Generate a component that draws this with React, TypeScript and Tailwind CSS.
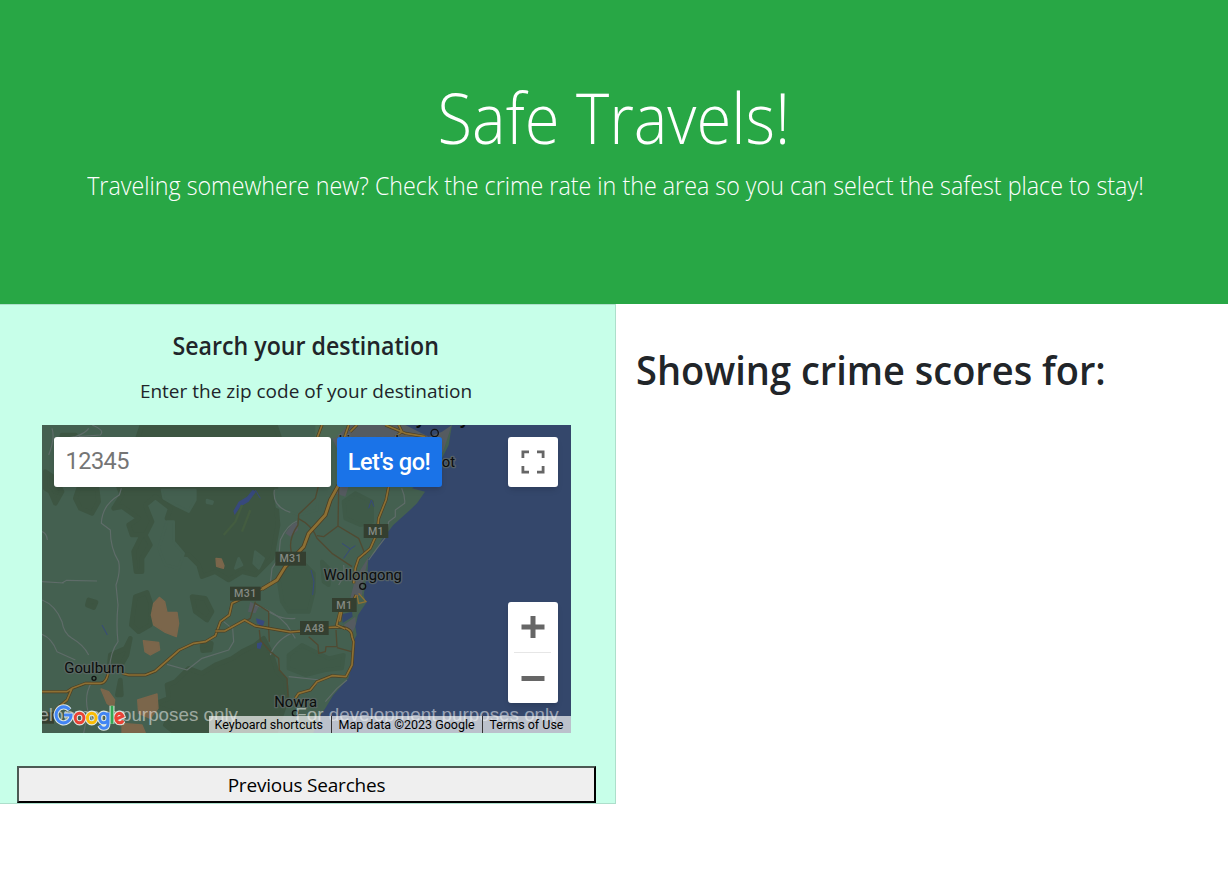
import React from "react";

const MINOR_ROADS = [
  "M0 470 L65 474 M60 474 L74 466 L165 468 M140 10 Q130 25 100 35 L40 45 M0 320 Q14 325 16 345 M0 525 Q40 540 60 590 Q65 625 90 640 Q125 660 140 690 M238 190 L232 210 Q180 240 178 295 L205 315 Q205 370 230 410 Q236 440 222 480 L228 540 Q222 600 228 650 Q205 680 202 735",
  "M30 10 Q40 40 20 90 M150 0 Q190 15 175 30 L110 35",
  "M0 628 Q30 640 45 680 L100 705 M150 770 Q125 810 138 860 L125 924",
  "M375 718 L435 735 L480 700 L560 675 L575 650 L572 610",
  "M697 195 Q690 245 745 262 M765 288 Q735 300 715 345 L710 400 L690 430 L685 475",
  "M1079 190 Q1090 215 1088 235 L1060 255 L1060 275 L1040 290 L1032 335 L1005 370 L980 405",
  "M740 755 L835 765 L815 785 M915 765 L885 790 L850 830 M640 540 Q700 560 735 600 L760 640",
  "M680 560 Q720 585 760 580 M685 690 Q705 640 760 620 M905 420 Q910 450 890 480 M545 590 L570 610",
];

const BROWN_ROADS = [
  "M830 180 L820 220 L770 268 L768 300 Q740 340 747 375 L750 410",
  "M768 280 Q810 300 825 340 L870 385 L930 425 M890 190 L888 303 L845 335 L825 332 M888 303 L950 340 L970 390",
  "M640 535 L680 560 L680 610 L682 650 M652 615 L655 645 L685 680 L710 700 L712 735 L735 760 L738 815",
  "M640 530 L625 580 L608 590 M800 635 L828 660 L830 685 L850 680 L852 665 L885 665 L882 615 M885 668 L928 680",
];

const HIGHWAYS = [
  "M660 492 L570 535 L562 570 L535 590 L520 632 L490 650 L455 655 L412 675 L340 738 L310 750 L260 750 L240 745",
  "M200 735 Q195 775 175 775 L130 775 L90 790 L75 800 L0 800 M90 790 L75 825 L45 850 L20 895",
  "M520 618 L548 618 L608 585 L640 603 L745 621 L780 618 M850 608 L885 606 Q930 606 930 635 L935 650 L930 720 L912 755 L870 752 L825 770 L805 795 L770 805 L760 820",
  "M1041 180 L1032 225 L1010 280 L1005 325 L985 370 L950 400 L940 430 L935 475 M942 510 L930 535 M895 555 L884 600 L910 612 M900 555 L893 590",
  "M925 20 L945 0 M900 60 L920 0 M1030 0 L1090 25 L1150 35 M840 0 L825 40 M1070 0 L1080 20 L1060 35",
];

const MAIN_HIGHWAY = "M890 180 L865 225 L850 270 L800 325 L785 365 L730 425 L705 465 L660 492";

const SHIELDS = [
  { label: "M31", x: 700, y: 380, w: 92 },
  { label: "M31", x: 564, y: 485, w: 92 },
  { label: "M1", x: 965, y: 297, w: 74 },
  { label: "M1", x: 870, y: 519, w: 74 },
  { label: "A48", x: 774, y: 588, w: 86 },
];

const PLACES = [
  { label: "Wollongong", x: 962, y: 464 },
  { label: "Goulburn", x: 157, y: 743 },
  { label: "Nowra", x: 761, y: 846 },
  { label: "Liverpool", x: 980, y: 62 },
  { label: "ot", x: 1219, y: 126 },
];

function MapArt() {
  return (
    <svg className="block h-full w-full" viewBox="0 0 1587 924" fontFamily="Roboto, sans-serif">
      <rect width="1587" height="924" fill="#446050" />
      <g fill="#3d5542" stroke="#3d5542" strokeWidth="14" strokeLinejoin="round">
        <path d="M300 0 L700 0 L720 60 L700 200 L708 300 L690 400 L640 450 L600 440 L560 465 L520 440 L480 455 L470 420 L440 390 L410 385 L385 350 L395 300 L375 280 L385 250 L340 215 L310 240 L330 290 L310 330 L325 360 L300 400 L300 440 L282 440 L275 380 L300 330 L270 330 L260 300 L290 280 L240 245 L215 250 L240 210 L215 150 L160 140 L190 60 L280 60Z" />
        <path d="M10 140 L40 160 L60 200 L40 235 L25 200 L10 190Z M110 190 L165 190 L170 230 L150 265 L115 250 L100 220Z M60 30 L100 30 L95 70 L60 60Z" />
        <path d="M400 770 L440 730 L480 745 L520 720 L570 700 L600 680 L640 660 L665 640 L690 690 L705 740 L730 765 L735 820 L700 924 L400 924 L370 900 L390 860 L330 840 L380 820 L375 780Z" />
        <path d="M280 515 L315 502 L328 540 L325 600 L290 620 L268 600Z M450 515 L490 520 L510 560 L495 585 L460 560Z M205 690 L250 670 L265 640 L255 690 L235 725 L200 740Z M140 525 L162 532 L155 548 L136 540Z M480 662 L508 655 L505 675 L482 677Z M235 765 L238 810 L226 810Z M405 395 L412 410 L402 412Z" />
      </g>
      <g fill="#3f5a48" stroke="#3f5a48" strokeWidth="12" strokeLinejoin="round">
        <path d="M710 465 L740 425 L790 420 L815 445 L815 500 L800 560 L740 560 L720 530Z M740 690 L780 660 L820 680 L860 700 L905 690 L900 730 L850 735 L790 750 L740 730Z M940 205 L990 230 L990 290 L955 300 L910 280 L905 230Z M840 410 L860 430 L860 480 L845 470Z" />
      </g>
      <g fill="#446050" stroke="#446050" strokeWidth="8" strokeLinejoin="round">
        <path d="M360 195 L460 195 L460 225 L440 260 L400 240 L365 220Z M375 290 L395 290 L395 350 L425 385 L410 430 L370 420 L350 370Z M700 195 L830 195 L825 255 L770 270 L705 245Z M495 225 L512 230 L510 236 L495 233Z M640 380 L665 400 L650 430 L635 415Z M590 400 L600 420 L580 430Z" />
      </g>
      <g fill="#7b664b" stroke="#7b664b" strokeWidth="4" strokeLinejoin="round">
        <path d="M522 400 L538 402 L546 422 L544 430 L524 424Z" />
        <path d="M352 517 L368 530 L375 562 L405 562 L410 595 L403 635 L370 622 L335 600 L328 570 L335 535Z" />
        <path d="M304 647 L350 652 L353 675 L325 690 L309 680Z M177 792 L200 800 L218 825 L215 848 L195 835Z M287 825 L345 807 L348 850 L325 880 L290 865Z M240 895 L300 900 L310 924 L240 924Z" />
      </g>
      <g fill="#555b60">
        <path d="M850 0 L1229 0 L1205 75 L1185 115 L1100 180 L1060 180 L1040 150 L930 150 L910 215 L880 205 L900 100Z" />
        <path d="M748 300 L765 290 L768 315 L745 335 L730 325Z M980 395 L965 460 L960 510 L925 520 L940 460Z M905 600 L940 575 L942 600 L930 625Z M625 530 L650 545 L640 565 L618 560Z" />
      </g>
      <path fill="#4b6752" d="M820 0 L920 0 L880 40 L820 40Z" />
      <path
        fill="#34476b"
        d="M1230 0 L1587 0 L1587 924 L814 924 L834 872 L850 850 L874 810 L919 760 L930 720 L936 700 L934 650 L944 630 L940 605 L948 570 L972 535 L965 510 L977 435 L979 400 L1000 380 L1019 345 L1054 300 L1104 255 L1125 235 L1149 200 L1110 190 L1185 130 L1220 60Z"
      />
      <path fill="#34476b" d="M900 568 L930 560 L932 575 L902 594Z M1090 0 L1230 0 L1200 20 L1160 35Z" />
      <path fill="#37497d" d="M574 258 L590 230 L615 215 L632 194 L642 200 L620 230 L595 245 L578 270Z M642 580 L668 588 L662 605 L645 595Z M645 655 L662 650 L655 672 L645 670Z" />
      <path fill="none" stroke="#37497d" strokeWidth="3" d="M640 195 L655 220 M180 600 L196 630 M900 355 L925 372 L905 400 M925 372 L940 362 M980 250 L988 225 L996 245 M807 435 L816 470 L812 510" />
      <path fill="none" stroke="#435c40" strokeWidth="7" d="M600 240 L580 290 L545 330 M625 255 L600 320" />
      {MINOR_ROADS.map((d) => (
        <path key={d} d={d} fill="none" stroke="#5f6c69" strokeWidth="3.5" strokeLinejoin="round" />
      ))}
      {BROWN_ROADS.map((d) => (
        <path key={d} d={d} fill="none" stroke="#504a32" strokeWidth="4" strokeLinejoin="round" />
      ))}
      {HIGHWAYS.map((d) => (
        <g key={d} fill="none" strokeLinejoin="round">
          <path d={d} stroke="#4d3f22" strokeWidth="9" />
          <path d={d} stroke="#8d7034" strokeWidth="5" />
        </g>
      ))}
      <path fill="none" stroke="#4d3f22" strokeWidth="13" strokeLinejoin="round" d={MAIN_HIGHWAY} />
      <path fill="none" stroke="#8d7034" strokeWidth="8" strokeLinejoin="round" d={MAIN_HIGHWAY} />
      <path fill="none" stroke="#8d7034" strokeWidth="4" d="M950 505 L972 530 L950 535 L945 510" />
      <rect x="0" y="862" width="36" height="34" fill="#343f30" />
      {SHIELDS.map((s) => (
        <g key={`${s.x}-${s.y}`}>
          <rect x={s.x} y={s.y} width={s.w} height="42" fill="#343f30" />
          <text x={s.x + s.w / 2} y={s.y + 32} textAnchor="middle" fontSize="32" fontWeight="500" fill="#858a83" letterSpacing="1">
            {s.label}
          </text>
        </g>
      ))}
      <g fill="none" stroke="#111" strokeWidth="4">
        <circle cx="962" cy="484" r="9" />
        <circle cx="156" cy="760" r="6" />
        <circle cx="760" cy="865" r="9" />
        <circle cx="1178" cy="24" r="11" />
      </g>
      {PLACES.map((p) => (
        <text
          key={p.label}
          x={p.x}
          y={p.y}
          textAnchor="middle"
          fontSize="44.5"
          fill="#0b0d0c"
          stroke="#5d6866"
          strokeOpacity="0.8"
          strokeWidth="8"
          paintOrder="stroke"
          strokeLinejoin="round"
        >
          {p.label}
        </text>
      ))}
      <text x="1183" y="-3" textAnchor="middle" fontSize="62" fontWeight="500" fill="#0b0d0c">
        Sydney
      </text>
      <g fill="#ffffff" fillOpacity="0.5" fontFamily="'Liberation Sans', sans-serif" fontSize="56.4">
        <text x="588" y="887" textAnchor="end">
          For development purposes only
        </text>
        <text x="1550" y="887" textAnchor="end">
          For development purposes only
        </text>
      </g>
    </svg>
  );
}

const LOGO_STROKES = [
  { d: "M18.6 6.8 A8 8 0 1 0 20.4 12 H12.8", color: "#4285f4" },
  { d: "M34 15 a4.6 4.8 0 1 1 -9.2 0 a4.6 4.8 0 1 1 9.2 0", color: "#ea4335" },
  { d: "M47 15 a4.6 4.8 0 1 1 -9.2 0 a4.6 4.8 0 1 1 9.2 0", color: "#fbbc05" },
  { d: "M59.6 15 a4.4 4.8 0 1 1 -8.8 0 a4.4 4.8 0 1 1 8.8 0 M59.8 9.4 V20 Q59.8 25.2 55.3 25.2 Q52.2 25.2 50.9 22.4", color: "#4285f4" },
  { d: "M64 2.8 V20.8", color: "#34a853" },
  { d: "M67.8 16.4 L75.6 13.2 Q74.4 10.2 71.8 10.2 A4.4 4.8 0 1 0 76 17.6", color: "#ea4335" },
];

function GoogleLogo() {
  return (
    <svg
      className="absolute bottom-px left-[10px] h-[29px] w-[75px]"
      viewBox="0 0 80 29"
      preserveAspectRatio="none"
      fill="none"
      aria-label="Google"
    >
      {LOGO_STROKES.map((s) => (
        <path key={`o${s.d}`} d={s.d} stroke="#dfe9e4" strokeWidth="5.2" />
      ))}
      {LOGO_STROKES.map((s) => (
        <path key={s.d} d={s.d} stroke={s.color} strokeWidth="3.1" />
      ))}
    </svg>
  );
}

function FullscreenIcon() {
  return (
    <svg className="h-6 w-6" viewBox="0 0 24 24" fill="none" stroke="#666" strokeWidth="2.8">
      <path d="M1.9 8 V1.9 H8 M16 1.9 H22.1 V8 M22.1 16 V22.1 H16 M8 22.1 H1.9 V16" />
    </svg>
  );
}

export default function App() {
  return (
    <div className="min-h-[883px] bg-white font-['Open_Sans','Noto_Sans',sans-serif] text-[#212529]">
      <header className="flex h-[304px] flex-col items-center overflow-hidden bg-[#28a745] pt-[75px] text-center font-light text-white">
        <h1 className="scale-x-[0.905] text-[70px] leading-[84px] font-light whitespace-nowrap">Safe Travels!</h1>
        <p className="mt-[8px] ml-[2px] scale-x-[0.931] text-[25px] leading-[37px] font-[340] whitespace-nowrap">
          Traveling somewhere new? Check the crime rate in the area so you can select the safest place to stay!
        </p>
      </header>

      <main className="flex items-start">
        <section className="flex h-[500px] w-[616px] shrink-0 flex-col items-center border border-l-0 border-[#addfcb] bg-[#c7ffe9] pr-[3px] pt-[25px]">
          <h2 className="scale-x-[0.927] text-[25px] leading-[30px] font-semibold whitespace-nowrap">Search your destination</h2>
          <p className="mt-[16px] text-[19px] leading-[30px] whitespace-nowrap">Enter the zip code of your destination</p>

          <div className="relative mt-[19px] h-[308px] w-[529px] shrink-0 overflow-hidden font-[Roboto,sans-serif]">
            <MapArt />
            <div className="absolute top-3 left-3 flex gap-1.5">
              <input
                className="h-[50px] w-[277px] rounded-[3px] bg-white px-3 pb-0.5 text-[23.5px] tracking-[-0.5px] shadow-md outline-none placeholder:text-[#757575]"
                placeholder="12345"
              />
              <button className="h-[50px] w-[105px] rounded-[3px] bg-[#1a73e8] pt-0.5 text-[23.5px] font-medium tracking-[-0.5px] whitespace-nowrap text-white shadow-md">
                Let's go!
              </button>
            </div>
            <button aria-label="Toggle fullscreen" className="absolute top-3 right-[13px] flex h-[50px] w-[50px] items-center justify-center rounded-[3px] bg-white shadow-md">
              <FullscreenIcon />
            </button>
            <div className="absolute right-[13px] bottom-[30px] flex h-[101px] w-[50px] flex-col items-center rounded-[3px] bg-white shadow-md">
              <button aria-label="Zoom in" className="flex h-[50px] items-center justify-center">
                <svg className="h-6 w-6" viewBox="0 0 24 24" stroke="#666" strokeWidth="5">
                  <path d="M12 1 V23 M0.5 12 H23.5" />
                </svg>
              </button>
              <div className="h-px w-[37px] bg-[#e6e6e6]" />
              <button aria-label="Zoom out" className="flex h-[50px] items-center justify-center">
                <svg className="h-6 w-6" viewBox="0 0 24 24" stroke="#666" strokeWidth="5">
                  <path d="M0.5 12.5 H23.5" />
                </svg>
              </button>
            </div>
            <GoogleLogo />
            <div className="absolute right-0 bottom-0 flex h-[17px] w-[362px] items-center bg-[#f5f5f5]/70 text-[12.5px] leading-[17px] whitespace-nowrap text-black">
              <span className="w-[123px] border-r border-[#333] pl-1.5">Keyboard shortcuts</span>
              <span className="w-[151px] border-r border-[#333] pl-[7px]">Map data ©2023 Google</span>
              <span className="pl-[7px]">Terms of Use</span>
            </div>
          </div>

          <button className="mt-[33px] ml-[1px] flex h-[37px] w-[579px] shrink-0 items-center justify-center border-2 border-t-[#4c5a54] border-r-black border-b-black border-l-[#4c5a54] bg-[#efefef] pt-0.5 text-[19px] tracking-[-0.2px] text-black">
            Previous Searches
          </button>
        </section>

        <section className="pt-[42px] pl-5">
          <h2 className="origin-left scale-x-[0.95] text-[40px] leading-[48px] font-semibold whitespace-nowrap">Showing crime scores for:</h2>
        </section>
      </main>
    </div>
  );
}
